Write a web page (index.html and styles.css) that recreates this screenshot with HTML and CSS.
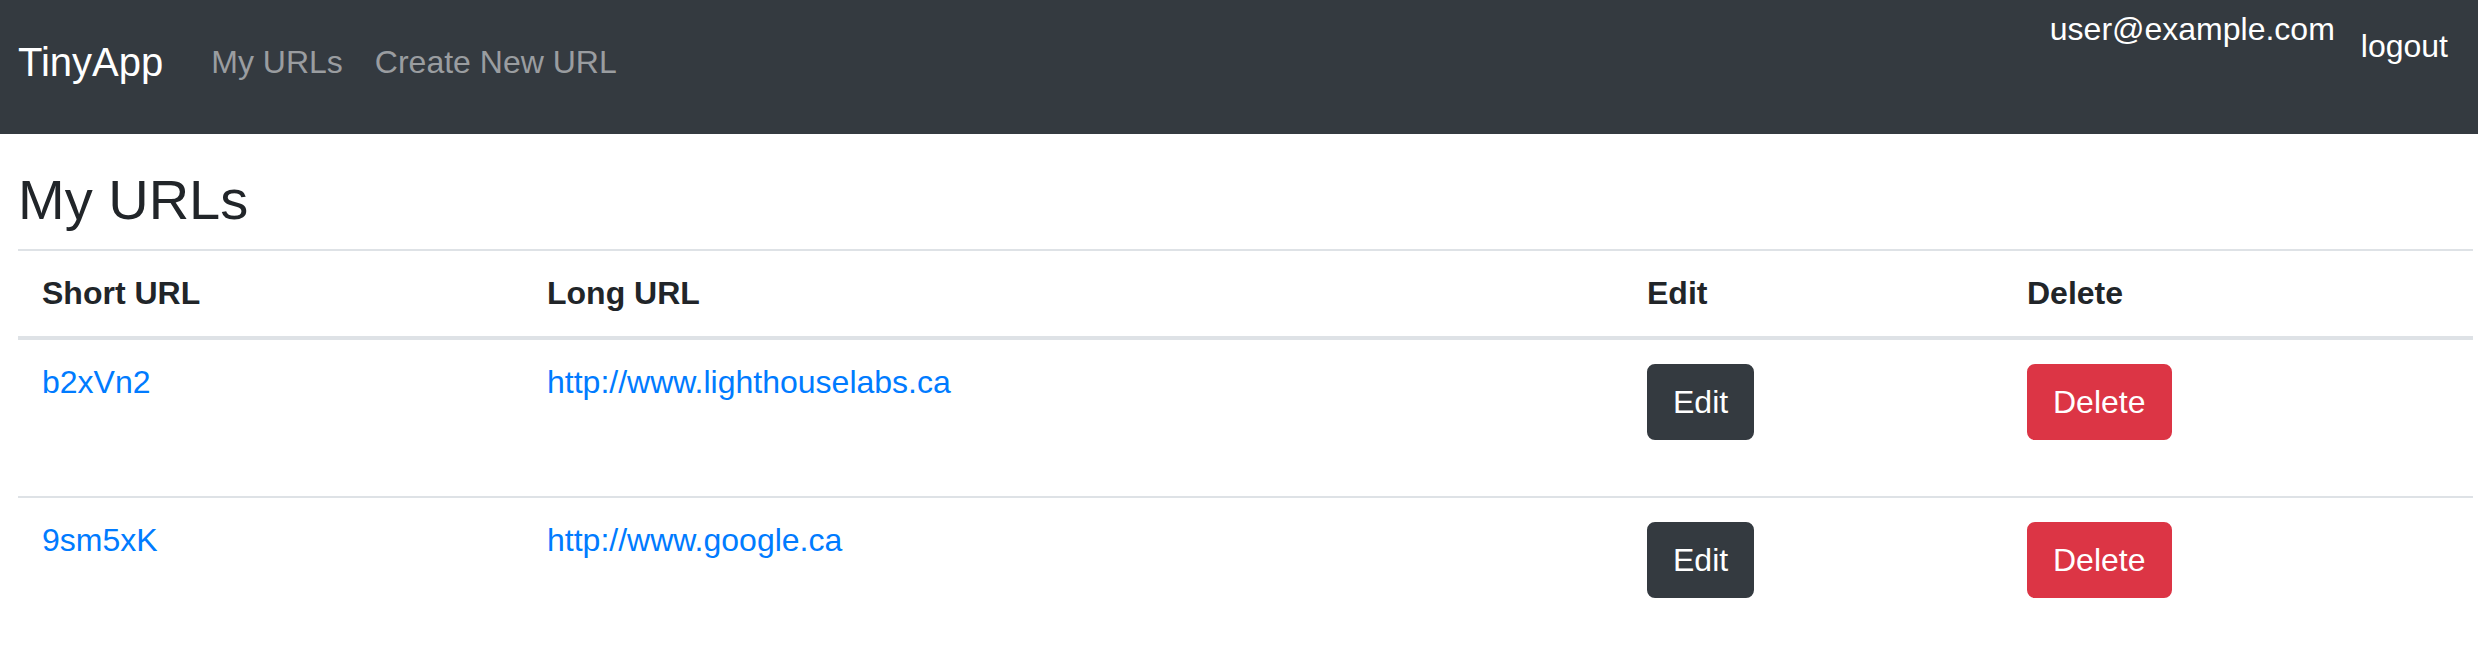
FILE: index.html
```html
<!DOCTYPE html>
<html lang="en">
<head>
<meta charset="utf-8">
<title>TinyApp</title>
<link rel="stylesheet" href="styles.css">
</head>
<body>
<nav class="navbar">
  <div class="nav-left">
    <a class="brand" href="#">TinyApp</a>
    <a class="nav-link" href="#">My URLs</a>
    <a class="nav-link" href="#">Create New URL</a>
  </div>
  <div class="nav-right">
    <span class="user">user@example.com</span>
    <form class="logout-form"><button class="logout" type="button">logout</button></form>
  </div>
</nav>
<main class="content">
  <h3 class="title">My URLs</h3>
  <table class="urls">
    <colgroup>
      <col class="c-short">
      <col class="c-long">
      <col class="c-edit">
      <col class="c-del">
    </colgroup>
    <thead>
      <tr>
        <th>Short URL</th>
        <th>Long URL</th>
        <th>Edit</th>
        <th>Delete</th>
      </tr>
    </thead>
    <tbody>
      <tr>
        <td><a class="link" href="#">b2xVn2</a></td>
        <td><a class="link" href="#">http://www.lighthouselabs.ca</a></td>
        <td><form class="row-form"><button class="btn btn-dark" type="button">Edit</button></form></td>
        <td><form class="row-form"><button class="btn btn-danger" type="button">Delete</button></form></td>
      </tr>
      <tr>
        <td><a class="link" href="#">9sm5xK</a></td>
        <td><a class="link" href="#">http://www.google.ca</a></td>
        <td><form class="row-form"><button class="btn btn-dark" type="button">Edit</button></form></td>
        <td><form class="row-form"><button class="btn btn-danger" type="button">Delete</button></form></td>
      </tr>
    </tbody>
  </table>
</main>
</body>
</html>
```
FILE: styles.css
```css
* { box-sizing: border-box; }

body {
  margin: 0;
  font-family: "Liberation Sans", Arial, sans-serif;
  color: #212529;
  background: #fff;
}

.navbar {
  display: flex;
  justify-content: space-between;
  height: 134px;
  padding: 0 30px 0 18px;
  background: #343a40;
}

.nav-left {
  display: flex;
  align-items: center;
  padding-bottom: 10px;
}

.brand {
  font-size: 40px;
  line-height: 60px;
  color: #fff;
  text-decoration: none;
  margin-right: 32px;
}

.nav-link {
  font-size: 32px;
  line-height: 48px;
  padding: 0 16px;
  color: #9a9da0;
  text-decoration: none;
}

.nav-right {
  display: flex;
  align-items: flex-start;
  gap: 26px;
}

.user {
  margin-top: 11px;
  font-size: 32px;
  line-height: 37px;
  color: #fff;
}

.logout-form { margin: 0; }

.logout {
  margin-top: 28px;
  padding: 0;
  border: 0;
  background: none;
  font-family: inherit;
  font-size: 32px;
  line-height: 37px;
  color: #fff;
}

.content {
  padding: 0 5px 0 18px;
}

.title {
  margin: 34px 0 17px;
  font-size: 56px;
  line-height: 64px;
  font-weight: 500;
}

.urls {
  width: 2455px;
  table-layout: fixed;
  border-collapse: separate;
  border-spacing: 0;
  font-size: 32px;
  line-height: 37px;
}

.c-short { width: 505px; }
.c-long { width: 1100px; }
.c-edit { width: 380px; }
.c-del { width: 470px; }

.urls th {
  text-align: left;
  font-weight: 700;
  padding: 24px;
  border-top: 2px solid #dee2e6;
  border-bottom: 4px solid #dee2e6;
}

.urls td {
  vertical-align: top;
  padding: 24px;
}

.urls tbody tr + tr td {
  border-top: 2px solid #dee2e6;
}

.link {
  color: #007bff;
  text-decoration: none;
}

.row-form { margin: 0 0 32px; }

.btn {
  display: inline-block;
  font-family: inherit;
  font-size: 32px;
  line-height: 48px;
  padding: 12px 24px;
  border-radius: 8px;
  color: #fff;
  cursor: pointer;
}

.btn-dark {
  background: #343a40;
  border: 2px solid #343a40;
}

.btn-danger {
  background: #dc3545;
  border: 2px solid #dc3545;
}
```
